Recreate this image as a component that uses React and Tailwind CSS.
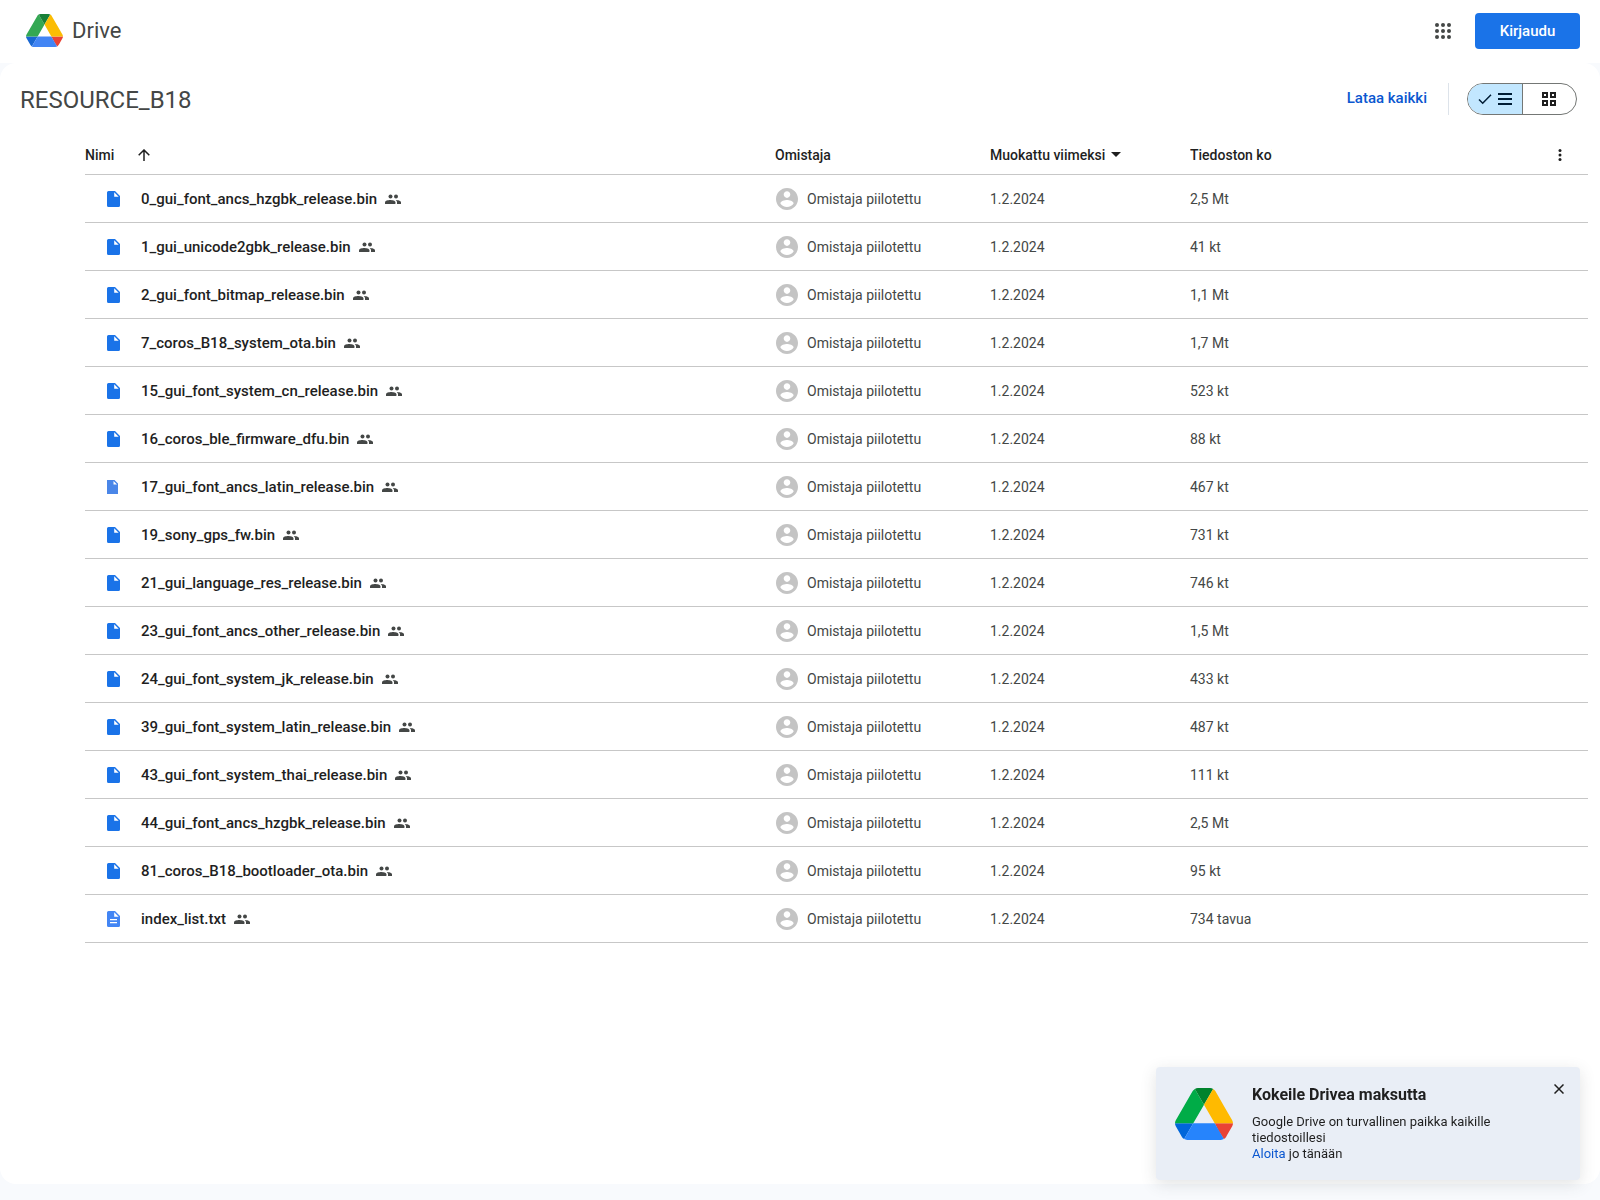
const files = [
  ["0_gui_font_ancs_hzgbk_release.bin", "2,5 Mt"],
  ["1_gui_unicode2gbk_release.bin", "41 kt"],
  ["2_gui_font_bitmap_release.bin", "1,1 Mt"],
  ["7_coros_B18_system_ota.bin", "1,7 Mt"],
  ["15_gui_font_system_cn_release.bin", "523 kt"],
  ["16_coros_ble_firmware_dfu.bin", "88 kt"],
  ["17_gui_font_ancs_latin_release.bin", "467 kt", "legacy"],
  ["19_sony_gps_fw.bin", "731 kt"],
  ["21_gui_language_res_release.bin", "746 kt"],
  ["23_gui_font_ancs_other_release.bin", "1,5 Mt"],
  ["24_gui_font_system_jk_release.bin", "433 kt"],
  ["39_gui_font_system_latin_release.bin", "487 kt"],
  ["43_gui_font_system_thai_release.bin", "111 kt"],
  ["44_gui_font_ancs_hzgbk_release.bin", "2,5 Mt"],
  ["81_coros_B18_bootloader_ota.bin", "95 kt"],
  ["index_list.txt", "734 tavua", "text"],
];

function DriveLogo({ className, colors }) {
  const [green, darkGreen, yellow, darkBlue, blue, red] = colors;
  return (
    <svg className={className} viewBox="0 0 87.3 78" aria-hidden="true">
      <path fill={darkBlue} d="m6.6 66.85 3.85 6.65c.8 1.4 1.95 2.5 3.3 3.3l13.75-23.8h-27.5c0 1.55.4 3.1 1.2 4.5z" />
      <path fill={green} d="m43.65 25-13.75-23.8c-1.35.8-2.5 1.9-3.3 3.3l-25.4 44a9.06 9.06 0 0 0 -1.2 4.5h27.5z" />
      <path fill={red} d="m73.55 76.8c1.35-.8 2.5-1.9 3.3-3.3l1.6-2.75 7.65-13.25c.8-1.4 1.2-2.95 1.2-4.5h-27.502l5.852 11.5z" />
      <path fill={darkGreen} d="m43.65 25 13.75-23.8c-1.35-.8-2.9-1.2-4.5-1.2h-18.5c-1.6 0-3.15.45-4.5 1.2z" />
      <path fill={blue} d="m59.8 53h-32.3l-13.75 23.8c1.35.8 2.9 1.2 4.5 1.2h50.8c1.6 0 3.15-.45 4.5-1.2z" />
      <path fill={yellow} d="m73.4 26.5-12.7-22c-.8-1.4-1.95-2.5-3.3-3.3l-13.75 23.8 16.15 28h27.45c0-1.55-.4-3.1-1.2-4.5z" />
    </svg>
  );
}

function FileIcon({ kind }) {
  if (kind === "legacy") {
    return (
      <svg className="h-4 w-[13px]" viewBox="0 0 13 16" fill="#4a86e8" aria-hidden="true">
        <path fillRule="evenodd" d="M0 1h7.5L11 4.500V15H0zM6.500 2v3.500H10z" />
      </svg>
    );
  }
  return (
    <svg className="h-4 w-[13px]" viewBox="0 0 13 16" fill={kind === "text" ? "#4285f4" : "#1a73e8"} aria-hidden="true">
      <path
        fillRule="evenodd"
        d={
          kind === "text"
            ? "M1.500 0H8l5 5v9.500a1.500 1.500 0 0 1-1.500 1.500h-10A1.500 1.500 0 0 1 0 14.500v-13A1.500 1.500 0 0 1 1.500 0zM7.200 1.200v4.500h4.500zM3 8v1.300h7V8zM3 11v1.300h7V11z"
            : "M1.500 0H8l5 5v9.500a1.500 1.500 0 0 1-1.500 1.500h-10A1.500 1.500 0 0 1 0 14.500v-13A1.500 1.500 0 0 1 1.500 0zM7.200 1.200v4.500h4.500z"
        }
      />
    </svg>
  );
}

function PeopleIcon() {
  return (
    <svg className="h-4 w-4 shrink-0" viewBox="0 0 16 16" fill="#444746" aria-label="Jaettu">
      <circle cx="5.500" cy="5.500" r="2" />
      <circle cx="11" cy="5.500" r="2" />
      <path d="M0 13v-1.700C0 9.700 3.300 9 5.200 9s5.200.7 5.200 2.300V13z" />
      <path d="M10.700 9c2 .1 5.300.8 5.300 2.300V13h-4v-1.700c0-.9-.5-1.700-1.300-2.300z" />
    </svg>
  );
}

function Avatar() {
  return (
    <svg className="h-[22px] w-[22px] shrink-0" viewBox="2 2 20 20" fill="#c4c4c4" aria-hidden="true">
      <path d="M12 2C6.480 2 2 6.480 2 12s4.480 10 10 10 10-4.480 10-10S17.520 2 12 2zm0 3c1.660 0 3 1.340 3 3s-1.340 3-3 3-3-1.340-3-3 1.340-3 3-3zm0 14.200c-2.500 0-4.710-1.280-6-3.220.03-1.990 4-3.080 6-3.080 1.990 0 5.970 1.090 6 3.080-1.290 1.940-3.500 3.220-6 3.220z" />
    </svg>
  );
}

const dots = [2, 8, 14];

export default function App() {
  return (
    <div className="flex min-h-screen flex-col bg-[#f8fafd] pb-4 font-['Roboto',sans-serif] text-sm text-[#1f1f1f]">
      <header className="flex h-[63px] items-center bg-white pr-5 pb-0.5 pl-[26px]">
        <a href="#" className="flex items-center gap-[9px] text-[22px] text-[#444746]">
          <DriveLogo className="h-[33px] w-[37px]" colors={["#34a853", "#188038", "#fbbc04", "#1967d2", "#4285f4", "#ea4335"]} />
          Drive
        </a>
        <button type="button" aria-label="Google-sovellukset" className="mr-5 ml-auto p-1">
          <svg className="h-4 w-4" viewBox="0 0 16 16" fill="#444746" aria-hidden="true">
            {dots.map((y) => dots.map((x) => <circle key={`${x}-${y}`} cx={x} cy={y} r="2" />))}
          </svg>
        </button>
        <button type="button" className="h-9 w-[105px] rounded bg-[#1a73e8] text-[15px] leading-5 font-medium text-white">
          Kirjaudu
        </button>
      </header>

      <main className="grow rounded-2xl bg-white">
        <div className="flex h-[71px] items-center pr-[23px] pl-5">
          <h1 className="pt-[3px] text-2xl text-[#444746]">RESOURCE_B18</h1>
          <button type="button" className="ml-auto text-[15px] font-medium text-[#0b57d0]">
            Lataa kaikki
          </button>
          <div className="mr-[18px] ml-[21px] h-8 w-px bg-[#dde3ea]" />
          <div className="flex h-8 w-[110px] overflow-hidden rounded-full border border-[#747775]">
            <button type="button" aria-label="Luettelo" aria-pressed="true" className="flex w-[55px] items-center justify-center gap-1.5 border-r border-[#747775] bg-[#c2e7ff]">
              <svg className="h-3.5 w-3.5" viewBox="0 0 14 14" fill="none" stroke="#001d35" strokeWidth="1.500" aria-hidden="true">
                <path d="M1 7.500l3.700 3.700L13 2.800" />
              </svg>
              <svg className="h-3.5 w-3.5" viewBox="0 0 14 14" fill="#001d35" aria-hidden="true">
                <path d="M0 1h14v2H0zM0 6h14v2H0zM0 11h14v2H0z" />
              </svg>
            </button>
            <button type="button" aria-label="Ruudukko" aria-pressed="false" className="flex grow items-center justify-center pr-0.5">
              <svg className="h-3.5 w-3.5" viewBox="0 0 14 14" fill="none" stroke="#1f1f1f" strokeWidth="2" aria-hidden="true">
                <path d="M1 1h4v4H1zM9 1h4v4H9zM1 9h4v4H1zM9 9h4v4H9z" />
              </svg>
            </button>
          </div>
        </div>

        <div className="pr-3 pl-[85px]">
          <table className="w-full table-fixed border-collapse text-left">
            <thead>
              <tr className="h-10 border-b border-[#c7c7c7]">
                <th className="p-0 pt-0.5 font-medium">
                  <button type="button" className="flex items-center gap-6">
                    Nimi
                    <svg className="h-3 w-3" viewBox="0 0 12 12" fill="none" stroke="#1f1f1f" strokeWidth="1.500" aria-hidden="true">
                      <path d="M6 12V1M.700 6.300L6 1l5.300 5.300" />
                    </svg>
                  </button>
                </th>
                <th className="w-[215px] p-0 pt-0.5 font-medium">Omistaja</th>
                <th className="w-[200px] p-0 pt-0.5 font-medium">
                  <button type="button" className="flex items-center gap-1.5">
                    Muokattu viimeksi
                    <svg className="h-[5px] w-2.5" viewBox="0 0 10 5" fill="#1f1f1f" aria-hidden="true">
                      <path d="M0 0h10L5 5z" />
                    </svg>
                  </button>
                </th>
                <th className="w-[398px] p-0 pt-0.5 font-medium">
                  <div className="flex items-center justify-between pr-5">
                    <span className="w-[82px] overflow-hidden whitespace-nowrap">Tiedoston koko</span>
                    <button type="button" aria-label="Lisää" className="px-1.5">
                      <svg className="h-3 w-1" viewBox="0 0 4 12" fill="#1f1f1f" aria-hidden="true">
                        <circle cx="2" cy="1.500" r="1.500" />
                        <circle cx="2" cy="6" r="1.500" />
                        <circle cx="2" cy="10.500" r="1.500" />
                      </svg>
                    </button>
                  </div>
                </th>
              </tr>
            </thead>
            <tbody>
              {files.map(([name, size, kind]) => (
                <tr key={name} className="h-12 border-b border-[#c7c7c7] text-[#444746]">
                  <td className="p-0 pt-0.5">
                    <div className="flex items-center pl-[22px]">
                      <FileIcon kind={kind} />
                      <span className="mr-2 ml-[21px] text-[15px] leading-5 font-medium text-[#1f1f1f]">{name}</span>
                      <PeopleIcon />
                    </div>
                  </td>
                  <td className="p-0 pt-0.5">
                    <div className="flex items-center gap-[9px] pl-px">
                      <Avatar />
                      Omistaja piilotettu
                    </div>
                  </td>
                  <td className="p-0 pt-0.5">1.2.2024</td>
                  <td className="p-0 pt-0.5">{size}</td>
                </tr>
              ))}
            </tbody>
          </table>
        </div>
      </main>

      <aside className="fixed right-5 bottom-5 flex w-[424px] items-start rounded bg-[#e9eef6] pt-[17px] pr-4 pb-[18px] pl-[19px] shadow-[0_4px_16px_rgba(60,64,67,0.15)]">
        <DriveLogo className="mt-1 h-[52px] w-[58px]" colors={["#00ac47", "#00832d", "#ffba00", "#0066da", "#2684fc", "#ea4335"]} />
        <div className="ml-[19px] w-[260px]">
          <h2 className="pt-px text-base leading-5 font-bold">Kokeile Drivea maksutta</h2>
          <p className="mt-[9px] text-[13px] leading-4">
            Google Drive on turvallinen paikka kaikille tiedostoillesi
            <br />
            <a href="#" className="text-[#0b57d0]">Aloita</a> jo tänään
          </p>
        </div>
        <button type="button" aria-label="Sulje" className="ml-auto flex">
          <svg className="h-2.5 w-2.5" viewBox="0 0 10 10" fill="none" stroke="#1f1f1f" strokeWidth="1.500" aria-hidden="true">
            <path d="M.5.5l9 9M9.500.500l-9 9" />
          </svg>
        </button>
      </aside>
    </div>
  );
}
